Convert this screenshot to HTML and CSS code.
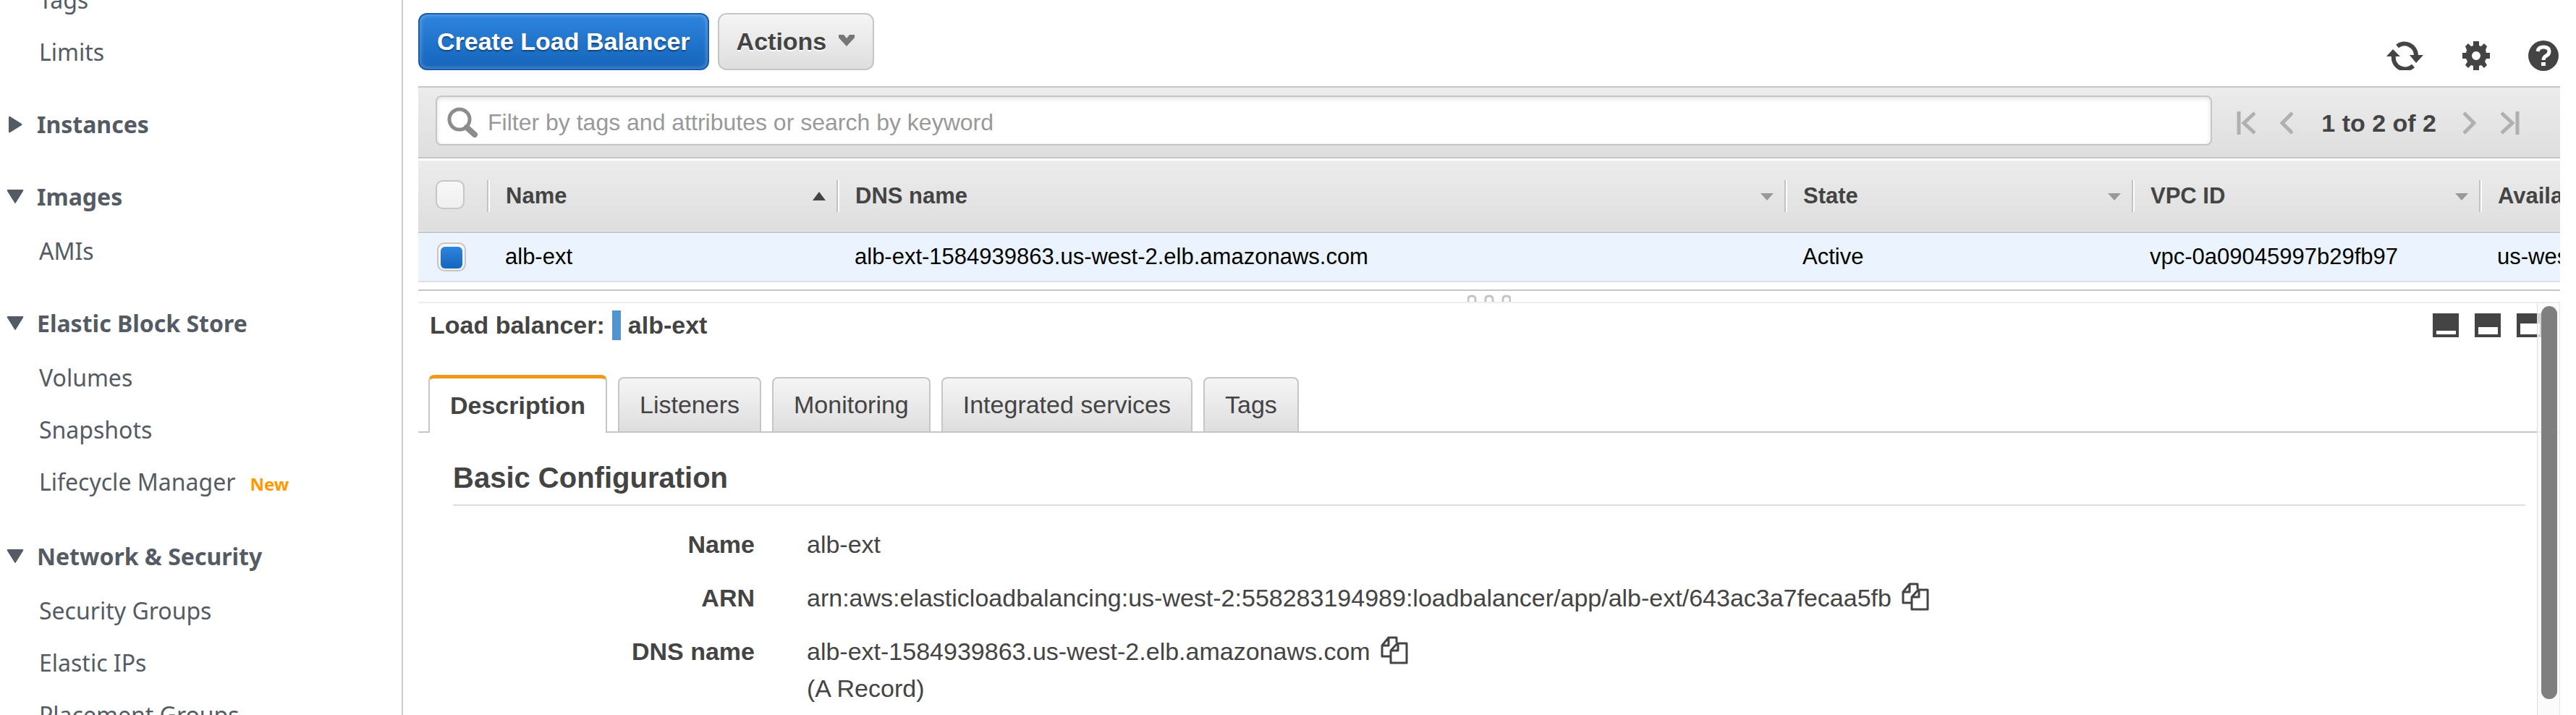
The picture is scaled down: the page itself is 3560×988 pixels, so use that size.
FILE: index.html
```html
<!DOCTYPE html>
<html lang="en">
<head>
    <meta charset="UTF-8">
    <meta name="viewport" content="width=device-width, initial-scale=1.0">
    <title>Load Balancers</title>
    <link rel="stylesheet" href="styles.css">
</head>
<body>

    <nav class="sidebar">
        <div class="nav-scroll">
            <ul class="nav-items">
                <li><a href="#">Tags</a></li>
                <li><a href="#">Limits</a></li>
            </ul>

            <h3 class="nav-heading"><svg class="arrow" viewBox="0 0 24 24"><path d="M3 2 Q3 0 5 1 L21 11 Q22 12 21 13 L5 23 Q3 24 3 22 Z"/></svg>Instances</h3>

            <h3 class="nav-heading"><svg class="arrow" viewBox="0 0 24 24"><path d="M2 2 H22 Q24 2 23 4 L13 20 Q12 22 11 20 L1 4 Q0 2 2 2 Z"/></svg>Images</h3>
            <ul class="nav-items">
                <li><a href="#">AMIs</a></li>
            </ul>

            <h3 class="nav-heading"><svg class="arrow" viewBox="0 0 24 24"><path d="M2 2 H22 Q24 2 23 4 L13 20 Q12 22 11 20 L1 4 Q0 2 2 2 Z"/></svg>Elastic Block Store</h3>
            <ul class="nav-items">
                <li><a href="#">Volumes</a></li>
                <li><a href="#">Snapshots</a></li>
                <li class="has-badge"><a href="#">Lifecycle Manager</a><span class="badge-new">New</span></li>
            </ul>

            <h3 class="nav-heading"><svg class="arrow" viewBox="0 0 24 24"><path d="M2 2 H22 Q24 2 23 4 L13 20 Q12 22 11 20 L1 4 Q0 2 2 2 Z"/></svg>Network &amp; Security</h3>
            <ul class="nav-items">
                <li><a href="#">Security Groups</a></li>
                <li><a href="#">Elastic IPs</a></li>
                <li><a href="#">Placement Groups</a></li>
            </ul>
        </div>
    </nav>

    <main class="main">
        <div class="actions">
            <button class="btn btn-primary" type="button">Create Load Balancer</button>
            <button class="btn" type="button">Actions
                <svg class="caret" viewBox="0 0 24 20"><path d="M1 0 H8 L12 5 L16 0 H23 V4 L12 16 L1 4 Z" fill="#777"/></svg>
            </button>
            <div class="tools">
                <button class="icon-btn" type="button" aria-label="Refresh">
                    <svg width="52" height="40" viewBox="0 0 52 40">
                        <path d="M15 7 A16 16 0 0 1 41 19" fill="none" stroke="#444" stroke-width="6"/>
                        <path d="M37 34 A16 16 0 0 1 10 20" fill="none" stroke="#444" stroke-width="6"/>
                        <path d="M32 19 H51 L41 30 Z M0 21 L9 11 L19 21 Z" fill="#444"/>
                    </svg>
                </button>
                <button class="icon-btn" type="button" aria-label="Settings">
                    <svg width="38" height="40" viewBox="0 0 38 40">
                        <path fill="#444" fill-rule="evenodd" d="M15 0 H23 V6 L26 7 L30 3 L34 7 L32 12 L33 16 H38 V24 H33 L31 28 L34 33 L30 37 L26 33 L23 34 V40 H15 V34 L12 33 L8 37 L4 33 L7 28 L5 24 H0 V16 H5 L6 12 L4 7 L8 3 L12 7 L15 6 Z M19 14 A6 6 0 1 0 19 26 A6 6 0 1 0 19 14 Z"/>
                    </svg>
                </button>
                <button class="icon-btn" type="button" aria-label="Help">
                    <svg width="42" height="42" viewBox="0 0 42 42">
                        <circle cx="21" cy="21" r="21" fill="#444"/>
                        <path d="M13 15 Q14 9 21 9 Q29 9 29 15 Q29 19 25 21 Q21 23 21 27" fill="none" stroke="#fff" stroke-width="5"/>
                        <path d="M18 30 H24 V35 H18 Z" fill="#fff"/>
                    </svg>
                </button>
            </div>
        </div>

        <div class="filter-bar">
            <label class="search">
                <svg width="42" height="42" viewBox="0 0 42 42" fill="none" stroke="#8c8c8c">
                    <circle cx="17" cy="17" r="14" stroke-width="5"/>
                    <path d="M27 28 L38 38" stroke-width="8" stroke-linecap="round"/>
                </svg>
                <input type="text" aria-label="Filter" placeholder="Filter by tags and attributes or search by keyword">
            </label>
            <div class="pager">
                <button class="icon-btn" type="button" aria-label="First page"><svg width="26" height="32" viewBox="0 0 26 32"><path d="M3 0 V32 M25 2 L10 16 L25 30"/></svg></button>
                <button class="icon-btn prev" type="button" aria-label="Previous page"><svg width="18" height="32" viewBox="0 0 18 32"><path d="M17 2 L3 16 L17 30"/></svg></button>
                <span class="count">1 to 2 of 2</span>
                <button class="icon-btn next" type="button" aria-label="Next page"><svg width="18" height="32" viewBox="0 0 18 32"><path d="M1 2 L15 16 L1 30"/></svg></button>
                <button class="icon-btn" type="button" aria-label="Last page"><svg width="26" height="32" viewBox="0 0 26 32"><path d="M23 0 V32 M1 2 L16 16 L1 30"/></svg></button>
            </div>
        </div>

        <div class="table-wrap">
            <table class="grid">
                <colgroup>
                    <col class="col-check">
                    <col class="col-name">
                    <col class="col-dns">
                    <col class="col-state">
                    <col class="col-vpc">
                    <col class="col-zone">
                </colgroup>
                <thead>
                    <tr>
                        <th><input type="checkbox" aria-label="Select all"></th>
                        <th><div class="head">Name<svg class="sort" viewBox="0 0 18 12"><path d="M9 0 L18 12 H0 Z" fill="#444"/></svg></div></th>
                        <th><div class="head">DNS name<svg class="sort" viewBox="0 0 18 12"><path d="M0 2 H18 L9 12 Z" fill="#999"/></svg></div></th>
                        <th><div class="head">State<svg class="sort" viewBox="0 0 18 12"><path d="M0 2 H18 L9 12 Z" fill="#999"/></svg></div></th>
                        <th><div class="head">VPC ID<svg class="sort" viewBox="0 0 18 12"><path d="M0 2 H18 L9 12 Z" fill="#999"/></svg></div></th>
                        <th><div class="head">Availability Zones</div></th>
                    </tr>
                </thead>
                <tbody>
                    <tr>
                        <td><input type="checkbox" aria-label="Select alb-ext" checked></td>
                        <td>alb-ext</td>
                        <td>alb-ext-1584939863.us-west-2.elb.amazonaws.com</td>
                        <td>Active</td>
                        <td>vpc-0a09045997b29fb97</td>
                        <td>us-west-2a</td>
                    </tr>
                </tbody>
            </table>
        </div>

        <div class="splitter">
            <svg width="60" height="10" viewBox="0 0 60 10" fill="none" stroke="#c4c4c4" stroke-width="3">
                <path d="M1 10 V6 Q1 2 6 2 Q11 2 11 6 V10 M25 10 V6 Q25 2 30 2 Q35 2 35 6 V10 M49 10 V6 Q49 2 54 2 Q59 2 59 6 V10"/>
            </svg>
        </div>

        <section class="details">
            <div class="details-title">
                <span>Load balancer:</span>
                <span class="marker"></span>
                <span>alb-ext</span>
                <div class="pane-icons">
                    <button class="icon-btn" type="button" aria-label="Small pane"><svg width="36" height="33" viewBox="0 0 36 33"><path d="M0 0 H36 V33 H0 Z" fill="#444"/><path d="M5 24 H32 V29 H5 Z" fill="#fff"/></svg></button>
                    <button class="icon-btn" type="button" aria-label="Medium pane"><svg width="36" height="33" viewBox="0 0 36 33"><path d="M0 0 H36 V33 H0 Z" fill="#444"/><path d="M5 19 H32 V29 H5 Z" fill="#fff"/></svg></button>
                    <button class="icon-btn" type="button" aria-label="Large pane"><svg width="36" height="33" viewBox="0 0 36 33"><path d="M0 0 H36 V33 H0 Z" fill="#444"/><path d="M5 14 H32 V29 H5 Z" fill="#fff"/></svg></button>
                </div>
            </div>

            <div class="tabs">
                <button class="tab active" type="button">Description</button>
                <button class="tab" type="button">Listeners</button>
                <button class="tab" type="button">Monitoring</button>
                <button class="tab" type="button">Integrated services</button>
                <button class="tab" type="button">Tags</button>
            </div>

            <div class="panel">
                <h2>Basic Configuration</h2>
                <dl class="info">
                    <dt>Name</dt>
                    <dd>alb-ext</dd>
                    <dt>ARN</dt>
                    <dd>arn:aws:elasticloadbalancing:us-west-2:558283194989:loadbalancer/app/alb-ext/643ac3a7fecaa5fb
                        <button class="icon-btn copy" type="button" aria-label="Copy ARN"><svg width="40" height="39" viewBox="0 0 40 39"><path d="M14 28 H3 V13 L12 2 H23 V9 M3 13 H12 V2 M15 20 L24 10 H37 V37 H15 Z M15 20 H25 V10"/></svg></button>
                    </dd>
                    <dt>DNS name</dt>
                    <dd>alb-ext-1584939863.us-west-2.elb.amazonaws.com
                        <button class="icon-btn copy" type="button" aria-label="Copy DNS name"><svg width="40" height="39" viewBox="0 0 40 39"><path d="M14 28 H3 V13 L12 2 H23 V9 M3 13 H12 V2 M15 20 L24 10 H37 V37 H15 Z M15 20 H25 V10"/></svg></button>
                        <br>(A Record)
                    </dd>
                </dl>
            </div>

            <div class="scrollbar"><div class="thumb"></div></div>
        </section>
    </main>

</body>
</html>
```

FILE: styles.css
```css
* {
    box-sizing: border-box;
}

body {
    margin: 0;
    height: 100vh;
    display: flex;
    overflow: hidden;
    background: #fff;
    color: #444;
    font-family: "Liberation Sans", Arial, sans-serif;
    font-size: 34px;
}

button {
    font: inherit;
    color: inherit;
}

svg {
    display: block;
}

/* Sidebar */
.sidebar {
    width: 557px;
    flex-shrink: 0;
    overflow: hidden;
    border-right: 2px solid #ccc;
    color: #545b64;
    font-family: "Noto Sans", sans-serif;
    font-size: 32px;
    line-height: 72px;
}

.nav-scroll {
    margin-top: -36px;
}

.nav-items {
    list-style: none;
    margin: 0;
    padding: 0 0 0 54px;
}

.nav-items a {
    color: inherit;
    text-decoration: none;
}

.has-badge {
    display: flex;
    align-items: baseline;
    gap: 20px;
    margin-bottom: 4px;
}

.badge-new {
    color: #ff9900;
    font-size: 24px;
    font-weight: bold;
}

.nav-heading {
    display: flex;
    align-items: center;
    gap: 18px;
    margin: 28px 0 3px;
    padding-left: 9px;
    font-size: inherit;
}

.arrow {
    width: 24px;
    height: 24px;
    fill: #545b64;
}

/* Main column */
.main {
    flex: 1;
    min-width: 0;
    display: flex;
    flex-direction: column;
    margin: 0 22px 0 21px;
}

.actions {
    display: flex;
    gap: 12px;
    padding: 18px 0 22px;
}

.btn {
    display: flex;
    align-items: center;
    gap: 16px;
    height: 79px;
    padding: 0 24px;
    border: 2px solid #c6c6c6;
    border-radius: 12px;
    background: linear-gradient(#f5f5f5, #dedede);
    font-weight: bold;
    text-shadow: 0 2px 0 #fff;
}

.btn-primary {
    border-color: #1a5cab;
    background: linear-gradient(#2e84dd, #1565bb);
    box-shadow: inset 0 0 6px rgba(255, 255, 255, 0.4);
    color: #fff;
    text-shadow: 0 2px 2px rgba(0, 0, 0, 0.4);
}

.caret {
    width: 24px;
    height: 20px;
}

.icon-btn {
    padding: 0;
    border: none;
    background: none;
    cursor: pointer;
}

.tools {
    display: flex;
    align-items: center;
    gap: 53px;
    margin-left: auto;
    padding: 38px 2px 0 0;
    height: 79px;
}

.filter-bar {
    display: flex;
    align-items: center;
    height: 100px;
    padding: 0 56px 6px 24px;
    border-top: 2px solid #c6c6c6;
    border-bottom: 2px solid #c6c6c6;
    background: linear-gradient(#ececec, #dedede);
}

.search {
    flex: 1;
    display: flex;
    align-items: center;
    gap: 14px;
    height: 69px;
    padding: 6px 14px 0;
    border: 2px solid #c6c6c6;
    border-radius: 8px;
    background: #fff;
    box-shadow: inset 0 2px 6px rgba(0, 0, 0, 0.12);
}

.search input {
    flex: 1;
    padding: 0;
    border: none;
    outline: none;
    background: none;
    font: inherit;
    font-size: 32px;
}

.search input::placeholder {
    color: #999;
}

.pager {
    display: flex;
    align-items: center;
    gap: 34px;
    margin-left: 34px;
    padding-top: 8px;
    font-weight: bold;
}

.pager svg {
    fill: none;
    stroke: #b0b0b0;
    stroke-width: 5;
}

.pager .prev {
    margin-right: 5px;
}

.pager .next {
    margin-left: 3px;
}

/* Load balancer table */
.table-wrap {
    margin-top: 3px;
    overflow: hidden;
}

.grid {
    width: 100%;
    table-layout: fixed;
    border-collapse: collapse;
    font-size: 31px;
    white-space: nowrap;
}

.col-check { width: 95px; }
.col-name { width: 483px; }
.col-state { width: 480px; }
.col-vpc { width: 480px; }
.col-zone { width: 112px; }

.grid th,
.grid td {
    padding: 0 0 0 25px;
    overflow: hidden;
    text-align: left;
}

.grid th {
    height: 99px;
    padding: 0;
}

.grid thead tr {
    border-bottom: 2px solid #c6c6c6;
    background: linear-gradient(#ececec, #dedede);
}

.head {
    display: flex;
    align-items: center;
    justify-content: space-between;
    height: 44px;
    padding: 0 15px 0 24px;
    border-left: 2px solid #c2c2c2;
    box-shadow: inset 2px 0 0 #fff;
}

.sort {
    width: 18px;
    height: 12px;
}

.grid td {
    height: 68px;
    border-bottom: 2px solid #dcdfe4;
    background: #eaf3fe;
    color: #000;
}

.grid td:first-child {
    padding-left: 26px;
}

.grid th:first-child {
    padding: 0 0 4px 24px;
}

.grid input {
    appearance: none;
    display: block;
    width: 40px;
    height: 40px;
    margin: 0;
    border: 2px solid #c6c6c6;
    border-radius: 10px;
    background: linear-gradient(#f8f8f8, #efefef);
}

.grid input:checked::before {
    content: "";
    display: block;
    width: 30px;
    height: 30px;
    margin: 4px 3px;
    border-radius: 6px;
    background: linear-gradient(#2e84dd, #1565bb);
}

.splitter {
    display: flex;
    justify-content: center;
    align-items: flex-end;
    height: 19px;
    margin-top: 10px;
    border-top: 2px solid #c6c6c6;
    border-bottom: 2px solid #eee;
}

/* Details pane */
.details {
    position: relative;
    flex: 1;
    min-height: 0;
    overflow: hidden;
}

.details-title {
    display: flex;
    align-items: center;
    gap: 10px;
    height: 60px;
    padding: 0 24px 0 16px;
    font-weight: bold;
}

.marker {
    width: 12px;
    height: 41px;
    background: #5294cf;
}

.pane-icons {
    display: flex;
    gap: 22px;
    margin-left: auto;
}

.tabs {
    display: flex;
    align-items: flex-end;
    gap: 15px;
    margin-top: 39px;
    padding-left: 14px;
    border-bottom: 2px solid #c6c6c6;
}

.tab {
    height: 75px;
    padding: 0 28px;
    border: 2px solid #c6c6c6;
    border-bottom: none;
    border-radius: 8px 8px 0 0;
    background: linear-gradient(#f5f5f5, #dedede);
}

.tab.active {
    height: 80px;
    margin-bottom: -2px;
    border-top: 5px solid #f0981a;
    background: #fff;
    font-weight: bold;
}

.panel {
    padding: 38px 48px 0;
}

.panel h2 {
    margin: 0 0 28px;
    padding-bottom: 12px;
    border-bottom: 2px solid #ddd;
    font-size: 40px;
    line-height: 49px;
}

.info {
    display: grid;
    grid-template-columns: 417px 1fr;
    column-gap: 72px;
    row-gap: 23px;
    margin: 0;
    line-height: 51px;
}

.info dt {
    font-weight: bold;
    text-align: right;
}

.info dd {
    margin: 0;
}

.copy {
    height: 39px;
    margin-left: 4px;
    vertical-align: -6px;
}

.copy svg {
    fill: none;
    stroke: #444;
    stroke-width: 3;
    stroke-linejoin: round;
}

.scrollbar {
    position: absolute;
    top: 0;
    right: 0;
    bottom: 0;
    width: 32px;
    padding: 4px 3px 22px 5px;
    border-left: 1px solid #ddd;
    border-right: 1px solid #e6e6e6;
    background: rgba(250, 250, 250, 0.8);
}

.thumb {
    height: 100%;
    border-radius: 11px;
    background: #7f7f7f;
}
```
